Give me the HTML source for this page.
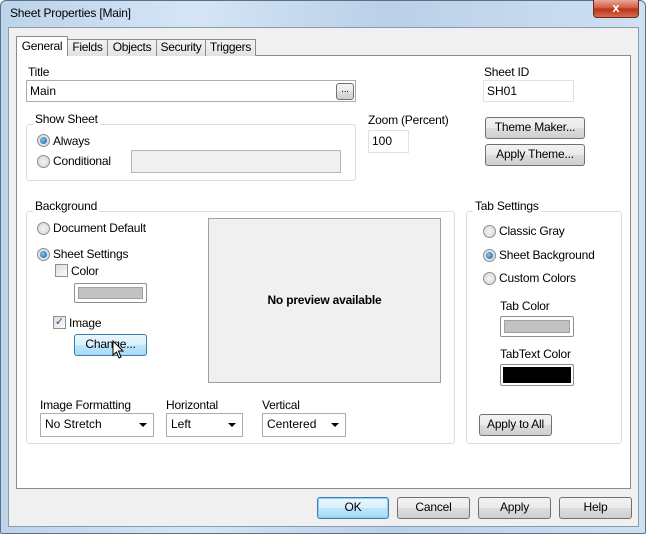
<!DOCTYPE html>
<html><head><style>
*{box-sizing:border-box;margin:0;padding:0}
body{width:646px;height:534px;overflow:hidden;font-family:"Liberation Sans",sans-serif;font-size:12px;color:#000;background:#fff}
.a{position:absolute}
#frame{left:0;top:0;width:646px;height:534px;background:linear-gradient(90deg,#bcd3ea 0%,#d5e5f5 30%,#b9d0e8 60%,#cfe0f2 100%);border:1px solid #5c6f85;border-radius:6px 6px 2px 2px}
#client{left:8px;top:27px;width:631px;height:500px;background:#f0f0f0;border:1px solid #8a9bb0}
#panel{left:16px;top:55px;width:615px;height:434px;background:#fff;border:1px solid #898c95}
.tab{top:39px;height:17px;background:linear-gradient(#f3f3f3,#e2e2e2);border:1px solid #898c95;border-bottom:none;text-align:center;line-height:15px;letter-spacing:-0.3px}
.lbl{white-space:nowrap;letter-spacing:-0.2px}
.inp{background:#fff;border:1px solid #abadb3;padding-left:3px;line-height:20px}
.grp{border:1px solid #d5dfe5;border-radius:3px}
.gl{background:#fff;padding:0 2px;white-space:nowrap;letter-spacing:-0.2px}
.btn{border:1px solid #707070;border-radius:3px;background:linear-gradient(#f2f2f2 0%,#ebebeb 50%,#dddddd 51%,#cfcfcf 100%);text-align:center;line-height:19px;letter-spacing:-0.2px;white-space:nowrap}
.rad{width:13px;height:13px;border-radius:50%;border:1px solid #8e8f8f;background:radial-gradient(#f4f4f4,#d4d4d4)}
.rad.on::after{content:"";position:absolute;left:2px;top:2px;width:7px;height:7px;border-radius:50%;background:radial-gradient(circle at 40% 40%,#7fc3f0,#0f5da0)}
.chk{width:13px;height:13px;border:1px solid #8e8f8f;background:linear-gradient(135deg,#dcdcdc,#fbfbfb)}
.sw{border:1px solid #8f8f8f;border-radius:2px;background:#fff;padding:3px}
.sw div{width:100%;height:100%;background:#c2c2c2;border:1px solid #a0a0a0}
.cmb{background:#fff;border:1px solid #abadb3;padding-left:4px;line-height:21px}
.cmb::after{content:"";position:absolute;right:6px;top:9px;border-left:4px solid transparent;border-right:4px solid transparent;border-top:4px solid #000}
</style></head><body>
<div class="a" id="frame"></div>
<div class="a lbl" style="left:10px;top:6px;font-size:12px">Sheet Properties [Main]</div>
<div class="a" style="left:593px;top:0;width:46px;height:18px;border:1px solid #6b2a1e;border-top:none;border-radius:0 0 4px 4px;background:linear-gradient(#e9a99a,#d0543b 50%,#b83218 51%,#d86b4a);color:#fff;text-align:center;font-weight:bold;font-size:13px;line-height:16px">x</div>
<div class="a" id="client"></div>
<div class="a" id="panel"></div>
<div class="a tab" style="left:16px;top:36px;width:52px;height:20px;background:#fff;z-index:2;line-height:19px">General</div>
<div class="a tab" style="left:67px;width:41px">Fields</div>
<div class="a tab" style="left:107px;width:50px">Objects</div>
<div class="a tab" style="left:156px;width:50px">Security</div>
<div class="a tab" style="left:205px;width:51px">Triggers</div>

<div class="a lbl" style="left:28px;top:65px">Title</div>
<div class="a inp" style="left:26px;top:80px;width:330px;height:22px">Main</div>
<div class="a btn" style="left:336px;top:83px;width:18px;height:17px;line-height:11px;font-size:10px">...</div>
<div class="a lbl" style="left:484px;top:65px">Sheet ID</div>
<div class="a inp" style="left:483px;top:80px;width:91px;height:22px;border-color:#dde3ea">SH01</div>

<div class="a grp" style="left:26px;top:124px;width:330px;height:57px"></div>
<div class="a gl" style="left:33px;top:112px">Show Sheet</div>
<div class="a rad on" style="left:37px;top:134px"></div><div class="a lbl" style="left:53px;top:134px">Always</div>
<div class="a rad" style="left:37px;top:155px"></div><div class="a lbl" style="left:53px;top:154px">Conditional</div>
<div class="a" style="left:131px;top:150px;width:210px;height:23px;background:#f0f0f0;border:1px solid #b5b5b5"></div>

<div class="a lbl" style="left:368px;top:113px">Zoom (Percent)</div>
<div class="a inp" style="left:368px;top:130px;width:41px;height:23px;border-color:#dde3ea">100</div>
<div class="a btn" style="left:485px;top:117px;width:100px;height:22px">Theme Maker...</div>
<div class="a btn" style="left:485px;top:144px;width:100px;height:22px">Apply Theme...</div>

<div class="a grp" style="left:26px;top:211px;width:429px;height:233px"></div>
<div class="a gl" style="left:33px;top:199px">Background</div>
<div class="a rad" style="left:37px;top:222px"></div><div class="a lbl" style="left:53px;top:221px">Document Default</div>
<div class="a rad on" style="left:37px;top:248px"></div><div class="a lbl" style="left:53px;top:247px">Sheet Settings</div>
<div class="a chk" style="left:55px;top:264px"></div><div class="a lbl" style="left:71px;top:264px">Color</div>
<div class="a sw" style="left:74px;top:283px;width:73px;height:20px"><div></div></div>
<div class="a chk" style="left:53px;top:316px;font-size:11px;line-height:10px;color:#2a4a8a;text-align:center">✓</div><div class="a lbl" style="left:69px;top:316px">Image</div>
<div class="a btn" style="left:74px;top:334px;width:73px;height:22px;border-color:#3c7fb1;background:linear-gradient(#eaf6fd,#d9f0fc 50%,#bee6fd 51%,#a7d9f5)">Change...</div>
<svg class="a" style="left:112px;top:340px" width="14" height="20" viewBox="0 0 14 20"><path d="M1 1 L1 15 L4.5 12 L7 18 L9 17 L6.5 11 L11 11 Z" fill="#fff" stroke="#000" stroke-width="1"/></svg>
<div class="a" style="left:208px;top:218px;width:233px;height:165px;background:#f0f0f0;border:1px solid #a0a0a0;text-align:center;line-height:163px;font-weight:bold;letter-spacing:-0.2px">No preview available</div>

<div class="a lbl" style="left:40px;top:398px">Image Formatting</div>
<div class="a cmb" style="left:40px;top:413px;width:114px;height:24px">No Stretch</div>
<div class="a lbl" style="left:166px;top:398px">Horizontal</div>
<div class="a cmb" style="left:166px;top:413px;width:77px;height:24px">Left</div>
<div class="a lbl" style="left:262px;top:398px">Vertical</div>
<div class="a cmb" style="left:262px;top:413px;width:84px;height:24px">Centered</div>

<div class="a grp" style="left:466px;top:211px;width:156px;height:233px"></div>
<div class="a gl" style="left:473px;top:199px">Tab Settings</div>
<div class="a rad" style="left:483px;top:225px"></div><div class="a lbl" style="left:499px;top:224px">Classic Gray</div>
<div class="a rad on" style="left:483px;top:249px"></div><div class="a lbl" style="left:499px;top:248px">Sheet Background</div>
<div class="a rad" style="left:483px;top:272px"></div><div class="a lbl" style="left:499px;top:271px">Custom Colors</div>
<div class="a lbl" style="left:500px;top:299px">Tab Color</div>
<div class="a sw" style="left:500px;top:316px;width:74px;height:21px"><div></div></div>
<div class="a lbl" style="left:500px;top:347px">TabText Color</div>
<div class="a" style="left:500px;top:364px;width:74px;height:22px;border:1px solid #8f8f8f;border-radius:2px;background:#fff;padding:2px"><div style="width:100%;height:100%;background:#000"></div></div>
<div class="a btn" style="left:479px;top:414px;width:73px;height:22px">Apply to All</div>

<div class="a btn" style="left:317px;top:497px;width:72px;height:22px;border-color:#3c7fb1;background:linear-gradient(#eaf6fd,#d9f0fc 50%,#bee6fd 51%,#a7d9f5);box-shadow:inset 0 0 0 1px #8fd0f2">OK</div>
<div class="a btn" style="left:397px;top:497px;width:73px;height:22px">Cancel</div>
<div class="a btn" style="left:478px;top:497px;width:73px;height:22px">Apply</div>
<div class="a btn" style="left:559px;top:497px;width:73px;height:22px">Help</div>
</body></html>
